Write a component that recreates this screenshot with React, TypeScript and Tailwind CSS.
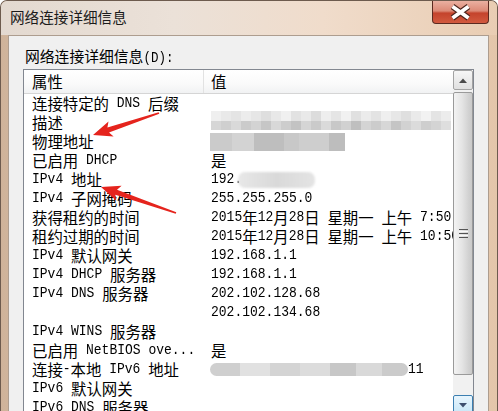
import React from "react";

const CJK_RE = /[\u2E80-\u9FFF\u3000-\u303F\uFF00-\uFFEF]/;
const SPLIT_RE = /[\u2E80-\u9FFF\u3000-\u303F\uFF00-\uFFEF]+|[^\u2E80-\u9FFF\u3000-\u303F\uFF00-\uFFEF]+/g;

function Mixed({ s, v }: { s: string; v: "list" | "label" | "title" }) {
  const parts = s.match(SPLIT_RE) || [];
  return (
    <>
      {parts.map((p, i) =>
        CJK_RE.test(p) ? (
          <span
            key={i}
            className={
              v === "list"
                ? "inline-block font-['Noto_Sans_CJK_SC',sans-serif] text-[15.4px] leading-[19px]"
                : v === "label"
                ? "inline-block font-['Noto_Sans_CJK_SC',sans-serif] text-[14.8px] leading-[18px]"
                : "inline-block font-['Noto_Sans_CJK_SC',sans-serif] text-[14.6px] leading-[20px]"
            }
          >
            {p}
          </span>
        ) : (
          <span
            key={i}
            className={
              v === "list"
                ? "inline-block font-['Liberation_Mono',monospace] text-[13px] leading-[17px] whitespace-pre scale-y-[1.15] origin-[50%_70%]"
                : "inline-block font-['Liberation_Mono',monospace] text-[12.5px] leading-[16px] whitespace-pre scale-y-[1.15] origin-[50%_70%]"
            }
          >
            {p}
          </span>
        )
      )}
    </>
  );
}

const descTop = ["#efefef","#e9e9e9","#e4e4e4","#ececec","#e6e6e6","#dedede","#e8e8e8","#f0f0f0","#e2e2e2","#e9e9e9","#dcdcdc","#eeeeee","#e5e5e5","#f1f1f1","#e0e0e0","#ebebeb","#e3e3e3","#efefef","#e7e7e7","#dfdfdf","#eaeaea","#f2f2f2","#e4e4e4","#ececec"];
const descBot = ["#d6d6d6","#cfcfcf","#d9d9d9","#cbcbcb","#d3d3d3","#c6c6c6","#d8d8d8","#cdcdcd","#c3c3c3","#d5d5d5","#cacaca","#dadada","#c8c8c8","#d1d1d1","#bfbfbf","#d4d4d4","#cccccc","#d7d7d7","#c5c5c5","#d2d2d2","#dbdbdb","#cecece","#d4d4d4","#dedede"];
const macBlocks: [number, string][] = [[22,"#cbcbcb"],[22,"#d3d3d3"],[30,"#bebebe"],[15,"#c8c8c8"],[30,"#cecece"],[16,"#bdbdbd"]];
const v6Blocks: [number, string][] = [[30,"#cfcfcf"],[30,"#e1e1e1"],[30,"#d4d4d4"],[30,"#dcdcdc"],[26,"#c7c7c7"],[26,"#d9d9d9"],[26,"#cbcbcb"]];

function DescMosaic() {
  return (
    <div className="flex flex-col -translate-y-[2px] shrink-0">
      <div className="flex h-[10px]">
        {descTop.map((c, i) => (
          <div key={i} className="w-[10px] h-[10px]" style={{ backgroundColor: c }} />
        ))}
      </div>
      <div className="flex h-[9px]">
        {descBot.map((c, i) => (
          <div key={i} className="w-[10px] h-[9px]" style={{ backgroundColor: c }} />
        ))}
      </div>
    </div>
  );
}

function MacMosaic() {
  return (
    <div className="flex h-[18px] -ml-[1px] shrink-0">
      {macBlocks.map(([w, c], i) => (
        <div key={i} className="h-[18px]" style={{ width: w, backgroundColor: c }} />
      ))}
    </div>
  );
}

function Ipv4() {
  return (
    <div className="flex items-center">
      <Mixed s="192." v="list" />
      <div className="-ml-[4px] w-[77px] h-[16px] rounded-[7px] blur-[1px] bg-[linear-gradient(90deg,#e8e8e8,#d9d9d9_50%,#e4e4e4)]" />
    </div>
  );
}

function Ipv6() {
  return (
    <div className="flex items-center -ml-[1px]">
      <div className="flex w-[198px] h-[13px] rounded-full overflow-hidden blur-[0.5px] shrink-0">
        {v6Blocks.map(([w, c], i) => (
          <div key={i} className="h-[13px]" style={{ width: w, backgroundColor: c }} />
        ))}
      </div>
      <Mixed s="11" v="list" />
    </div>
  );
}

type Row = [string, React.ReactNode];

const rows: Row[] = [
  ["连接特定的 DNS 后缀", null],
  ["描述", <DescMosaic />],
  ["物理地址", <MacMosaic />],
  ["已启用 DHCP", <Mixed s="是" v="list" />],
  ["IPv4 地址", <Ipv4 />],
  ["IPv4 子网掩码", <Mixed s="255.255.255.0" v="list" />],
  ["获得租约的时间", <Mixed s="2015年12月28日 星期一 上午 7:50:08" v="list" />],
  ["租约过期的时间", <Mixed s="2015年12月28日 星期一 上午 10:50:08" v="list" />],
  ["IPv4 默认网关", <Mixed s="192.168.1.1" v="list" />],
  ["IPv4 DHCP 服务器", <Mixed s="192.168.1.1" v="list" />],
  ["IPv4 DNS 服务器", <Mixed s="202.102.128.68" v="list" />],
  ["", <Mixed s="202.102.134.68" v="list" />],
  ["IPv4 WINS 服务器", null],
  ["已启用 NetBIOS ove...", <Mixed s="是" v="list" />],
  ["连接-本地 IPv6 地址", <Ipv6 />],
  ["IPv6 默认网关", null],
  ["IPv6 DNS 服务器", null],
];

function CloseBtn() {
  return (
    <div className="ml-auto mr-[8px] w-[57px] h-[23px] rounded-b-[4px] border border-t-0 border-[#5b2a20] bg-[linear-gradient(180deg,#eab0a1_0%,#dc8a77_45%,#c4432c_55%,#d25a3f_100%)] shrink-0">
      <svg width="55" height="22" viewBox="0 0 55 22">
        <path d="M19.5 5.5 L35.5 17 M35.5 5.5 L19.5 17" stroke="#4a241c" strokeWidth="6" />
        <path d="M19.5 5.5 L35.5 17 M35.5 5.5 L19.5 17" stroke="#ffffff" strokeWidth="3.8" />
      </svg>
    </div>
  );
}

function arrowPts(x1: number, y1: number, x2: number, y2: number) {
  const dx = x2 - x1, dy = y2 - y1;
  const L = Math.hypot(dx, dy);
  const ux = dx / L, uy = dy / L;
  const nx = -uy, ny = ux;
  const hl = 19, hw = 8, tw = 0.8, nw = 2.6;
  const bx = x2 - ux * hl, by = y2 - uy * hl;
  const nkx = bx + ux * 3, nky = by + uy * 3;
  const pts = [
    [x1 + nx * tw, y1 + ny * tw],
    [nkx + nx * nw, nky + ny * nw],
    [bx + nx * hw, by + ny * hw],
    [x2, y2],
    [bx - nx * hw, by - ny * hw],
    [nkx - nx * nw, nky - ny * nw],
    [x1 - nx * tw, y1 - ny * tw],
  ];
  return pts.map((p) => p[0].toFixed(1) + "," + p[1].toFixed(1)).join(" ");
}

function Arrows() {
  return (
    <svg className="absolute left-0 top-0 pointer-events-none" width="498" height="411" viewBox="0 0 498 411">
      <polygon points={arrowPts(158, 112, 92, 134)} fill="#e5241d" />
      <polygon points={arrowPts(175, 212, 100, 186)} fill="#e5241d" />
    </svg>
  );
}

function Scrollbar() {
  return (
    <div className="w-[20px] flex flex-col shrink-0">
      <div className="h-[20px] border border-[#a3a3a3] rounded-[2px] bg-[linear-gradient(180deg,#f6f6f6,#e0e0e0)] flex items-center justify-center">
        <svg width="8" height="5" viewBox="0 0 8 5">
          <path d="M0 5 L4 0.5 L8 5 Z" fill="#4a4a4a" />
        </svg>
      </div>
      <div className="h-[305px] bg-[#f1f1f1] flex flex-col">
        <div className="mt-[2px] h-[283px] border border-[#9a9a9a] rounded-[2px] bg-[linear-gradient(90deg,#f3f3f3,#e4e4e4_45%,#d2d2d2_80%,#c9c9c9)] flex items-center justify-center">
          <div className="flex flex-col gap-[1px]">
            <div className="w-[9px] h-[1px] bg-[#555555]" />
            <div className="w-[9px] h-[1px] bg-[#f8f8f8]" />
            <div className="w-[9px] h-[1px] bg-[#555555]" />
            <div className="w-[9px] h-[1px] bg-[#f8f8f8]" />
            <div className="w-[9px] h-[1px] bg-[#555555]" />
          </div>
        </div>
      </div>
      <div className="h-[20px] border border-[#3c7fb1] rounded-[2px] bg-[linear-gradient(180deg,#e8f5fd,#c6e6f7)] flex items-center justify-center">
        <svg width="8" height="5" viewBox="0 0 8 5">
          <path d="M0 0 L4 4.5 L8 0 Z" fill="#3d4f6e" />
        </svg>
      </div>
    </div>
  );
}

export default function App() {
  return (
    <div className="relative w-[498px] h-[411px] overflow-hidden flex flex-col rounded-t-[7px] border border-b-0 border-[#6d5b4e] bg-[linear-gradient(90deg,#cfb39a_0%,#e0cbb8_30%,#e8d3bf_70%,#e4c6aa_100%)]">
      <div className="h-[34px] flex items-start shrink-0 bg-[linear-gradient(90deg,#e3d9d0_0%,#ebe1d8_35%,#f0dccb_65%,#e9cdb3_100%)]">
        <div className="pl-[9px] pt-[6px] leading-[20px] text-[#1b1b1b]">
          <Mixed s="网络连接详细信息" v="title" />
        </div>
        <CloseBtn />
      </div>
      <div className="ml-[7px] mr-[8px] flex-1 min-h-0 overflow-hidden bg-[#f0f0f0] border border-b-0 border-[#ad9d8f] flex flex-col">
        <div className="pl-[16px] pt-[11px] h-[29px] leading-[18px] text-black shrink-0">
          <Mixed s="网络连接详细信息(D):" v="label" />
        </div>
        <div className="ml-[14px] mr-[14px] mt-[4px] h-[400px] shrink-0 border border-[#828790] bg-white flex">
          <div className="flex-1 min-w-0 flex flex-col">
            <div className="h-[24px] flex border-b border-[#d5d5d5] bg-[linear-gradient(180deg,#ffffff,#fafafa_60%,#f1f2f3)] shrink-0 text-black leading-[19px]">
              <div className="w-[180px] border-r border-[#e2e2e2] pl-[8px] flex items-center">
                <Mixed s="属性" v="list" />
              </div>
              <div className="pl-[7px] flex items-center">
                <Mixed s="值" v="list" />
              </div>
            </div>
            {rows.map(([k, v], i) => (
              <div key={i} className="h-[19px] flex shrink-0 text-black leading-[19px]">
                <div className="w-[180px] pl-[8px] flex items-center whitespace-nowrap">
                  <Mixed s={k} v="list" />
                </div>
                <div className="flex-1 min-w-0 pl-[7px] flex items-center whitespace-nowrap overflow-x-clip">
                  {v}
                </div>
              </div>
            ))}
          </div>
          <Scrollbar />
        </div>
      </div>
      <Arrows />
    </div>
  );
}
